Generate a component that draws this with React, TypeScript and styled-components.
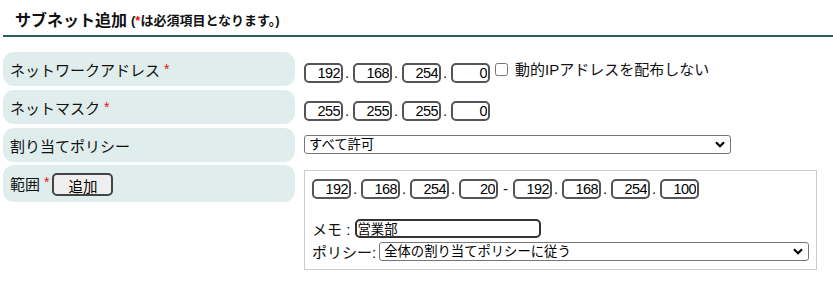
import React from "react";
import styled, { createGlobalStyle } from "styled-components";

const GlobalStyle = createGlobalStyle`
  html, body { margin: 0; padding: 0; background: #fff; }
  body {
    font-family: "Liberation Sans", "Noto Sans CJK JP", sans-serif;
    font-size: 15px;
    color: #111;
  }
`;

const Page = styled.div`
  padding: 0 0 0 3px;
  width: 830px;
`;

const Header = styled.div`
  height: 32px;
  padding: 3px 0 0 12px;
  display: flex;
  align-items: center;
  gap: 4px;
  border-bottom: 2px solid #2e5f5a;
`;

const Title = styled.span`
  font-size: 16px;
  font-weight: bold;
`;

const Note = styled.span`
  font-size: 13px;
  font-weight: bold;
`;

const Req = styled.span`
  color: #e81010;
  font-weight: bold;
`;

const Form = styled.div`
  margin-top: 15px;
  display: flex;
  flex-direction: column;
`;

const Row = styled.div<{ $gap: number }>`
  display: flex;
  align-items: flex-start;
  gap: 4px;
  margin-bottom: ${(p) => p.$gap}px;
`;

const Label = styled.div<{ $h: number }>`
  flex: 0 0 292px;
  height: ${(p) => p.$h}px;
  box-sizing: border-box;
  padding-left: 7px;
  display: flex;
  align-items: center;
  gap: 4px;
  background: #e0eded;
  border-radius: 11px;
  font-size: 15px;
  white-space: nowrap;
`;

const Star = styled.span`
  color: #e81010;
  font-size: 14px;
  align-self: flex-start;
  margin-top: 9px;
`;

const Value = styled.div<{ $top: number }>`
  display: flex;
  align-items: flex-start;
  padding: ${(p) => p.$top}px 0 0 5px;
`;

const IpGroup = styled.div<{ $top?: number }>`
  display: flex;
  align-items: baseline;
  flex-shrink: 0;
  margin-top: ${(p) => p.$top ?? 0}px;
`;

const IpInput = styled.input`
  width: 39px;
  height: 20px;
  box-sizing: border-box;
  border: 2px solid #555;
  border-radius: 5px;
  padding: 0 1px;
  text-align: right;
  font-family: "Liberation Sans", sans-serif;
  font-size: 14.5px;
  letter-spacing: -0.6px;
  color: #000;
  background: #fff;
  outline: none;
`;

const Sep = styled.span<{ $w: number; $align: string }>`
  display: inline-block;
  width: ${(p) => p.$w}px;
  box-sizing: border-box;
  padding-left: ${(p) => (p.$align === "left" ? 2 : 0)}px;
  text-align: ${(p) => p.$align};
  font-size: 15px;
`;

const CheckLabel = styled.label`
  display: flex;
  align-items: flex-start;
  gap: 7px;
  margin: 5px 0 0 5px;
  line-height: 16px;
  font-size: 15px;
  white-space: nowrap;
`;

const CheckBox = styled.input`
  width: 13px;
  height: 13px;
  margin: 1px 0 0;
`;

const SelectWrap = styled.span`
  position: relative;
  display: inline-flex;
  flex-shrink: 0;
`;

const Select = styled.select<{ $w: number }>`
  appearance: none;
  width: ${(p) => p.$w}px;
  height: 19px;
  box-sizing: border-box;
  border: 1px solid #767676;
  border-radius: 3px;
  padding: 0 20px 0 4px;
  font-family: "Liberation Sans", "Noto Sans CJK JP", sans-serif;
  font-size: 13.33px;
  line-height: 17px;
  color: #000;
  background: #fff;
`;

const Chevron = styled.svg`
  position: absolute;
  right: 6px;
  top: 6px;
  pointer-events: none;
`;

const AddButton = styled.button`
  height: 23px;
  box-sizing: border-box;
  margin: 2px 0 0 -1px;
  padding: 0 14px;
  border: 2px solid #444;
  border-radius: 5px;
  background: #efefef;
  font-family: "Liberation Sans", "Noto Sans CJK JP", sans-serif;
  font-size: 14.5px;
  color: #000;
`;

const RangeBox = styled.div`
  width: 513px;
  box-sizing: border-box;
  border: 1px solid #ccc;
  padding: 8px 8px 7px 7px;
  display: flex;
  flex-direction: column;
`;

const Line = styled.div<{ $top: number; $gap: number }>`
  display: flex;
  align-items: center;
  gap: ${(p) => p.$gap}px;
  margin-top: ${(p) => p.$top}px;
  font-size: 15px;
  white-space: nowrap;
`;

const MemoInput = styled.input`
  width: 186px;
  height: 19px;
  box-sizing: border-box;
  border: 2px solid #333;
  border-radius: 5px;
  padding: 0 1px;
  font-family: "Liberation Sans", "Noto Sans CJK JP", sans-serif;
  font-size: 13.33px;
  color: #000;
  background: #fff;
  outline: none;
`;

const Ip: React.FC<{ parts: string[]; top?: number }> = ({ parts, top }) => (
  <IpGroup $top={top}>
    {parts.map((p, i) => (
      <React.Fragment key={i}>
        <IpInput defaultValue={p} />
        {i < parts.length - 1 && (
          <Sep $w={10} $align="left">
            .
          </Sep>
        )}
      </React.Fragment>
    ))}
  </IpGroup>
);

const Dropdown: React.FC<{ w: number; value: string }> = ({ w, value }) => (
  <SelectWrap>
    <Select $w={w} defaultValue={value}>
      <option>{value}</option>
    </Select>
    <Chevron width="10" height="7" viewBox="0 0 10 7">
      <path d="M1 1.2 L5 5.2 L9 1.2" fill="none" stroke="#000" strokeWidth="2.2" />
    </Chevron>
  </SelectWrap>
);

export default function App() {
  return (
    <Page>
      <GlobalStyle />
      <Header>
        <Title>サブネット追加</Title>
        <Note>
          (<Req>*</Req>は必須項目となります。)
        </Note>
      </Header>
      <Form>
        <Row $gap={4}>
          <Label $h={34}>
            ネットワークアドレス<Star>*</Star>
          </Label>
          <Value $top={5}>
            <Ip parts={["192", "168", "254", "0"]} top={6} />
            <CheckLabel>
              <CheckBox type="checkbox" />
              動的IPアドレスを配布しない
            </CheckLabel>
          </Value>
        </Row>
        <Row $gap={4}>
          <Label $h={34}>
            ネットマスク<Star>*</Star>
          </Label>
          <Value $top={11}>
            <Ip parts={["255", "255", "255", "0"]} />
          </Value>
        </Row>
        <Row $gap={3}>
          <Label $h={34}>割り当てポリシー</Label>
          <Value $top={7}>
            <Dropdown w={427} value="すべて許可" />
          </Value>
        </Row>
        <Row $gap={0}>
          <Label $h={37}>
            範囲<Star>*</Star>
            <AddButton>追加</AddButton>
          </Label>
          <Value $top={5}>
            <RangeBox>
              <IpGroup>
                <Ip parts={["192", "168", "254", "20"]} />
                <Sep $w={15} $align="center">
                  -
                </Sep>
                <Ip parts={["192", "168", "254", "100"]} />
              </IpGroup>
              <Line $top={19} $gap={0}>
                メモ :&nbsp;<MemoInput defaultValue="営業部" />
              </Line>
              <Line $top={2} $gap={3}>
                ポリシー:
                <Dropdown w={430} value="全体の割り当てポリシーに従う" />
              </Line>
            </RangeBox>
          </Value>
        </Row>
      </Form>
    </Page>
  );
}
